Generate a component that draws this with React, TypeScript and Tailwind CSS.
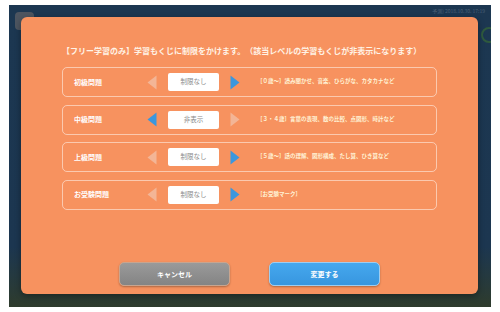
import React from "react";

type Level = {
  label: string;
  value: string;
  leftOn: boolean;
  rightOn: boolean;
  note: string;
};

const levels: Level[] = [
  { label: "初級問題", value: "制限なし", leftOn: false, rightOn: true, note: "［０歳〜］読み聞かせ、音楽、ひらがな、カタカナなど" },
  { label: "中級問題", value: "非表示", leftOn: true, rightOn: false, note: "［３・４歳］言葉の表現、数の比較、点図形、時計など" },
  { label: "上級問題", value: "制限なし", leftOn: false, rightOn: true, note: "［５歳〜］話の理解、図形構成、たし算、ひき算など" },
  { label: "お受験問題", value: "制限なし", leftOn: false, rightOn: true, note: "［お受験マーク］" },
];

function Arrow({ dir, on }: { dir: "left" | "right"; on: boolean }) {
  return (
    <svg width="10" height="15" viewBox="0 0 10 15" className="shrink-0">
      <path
        d={dir === "left" ? "M9.5 0.5 L0.5 7.5 L9.5 14.5 Z" : "M0.5 0.5 L9.5 7.5 L0.5 14.5 Z"}
        fill={on ? "#3b97de" : "#f3b596"}
      />
    </svg>
  );
}

function Row({ level }: { level: Level }) {
  return (
    <div className="flex h-[30px] items-center rounded-[5px] border border-white/50 pl-[11px]">
      <div className="w-[73px] text-[7px] font-bold leading-none text-white">{level.label}</div>
      <Arrow dir="left" on={level.leftOn} />
      <div className="ml-[11px] flex h-[18px] w-[51px] items-center justify-center rounded-[2px] bg-white text-[6.5px] text-[#8a8a8a]">
        {level.value}
      </div>
      <div className="ml-[11px] flex">
        <Arrow dir="right" on={level.rightOn} />
      </div>
      <div className="ml-[17px] text-[5.5px] font-bold leading-none text-[#fff3d6]">{level.note}</div>
    </div>
  );
}

export default function App() {
  return (
    <div
      className="h-[312px] w-[500px] overflow-hidden bg-white pl-[9px] pt-[5px]"
      style={{ fontFamily: '"Noto Sans CJK JP", "Noto Sans", sans-serif' }}
    >
      <div className="relative h-[302px] w-[482px] overflow-hidden bg-gradient-to-b from-[#1c3751] via-[#1c3650] via-80% to-[#2e3b2c]">
        {/* header behind the dialog */}
        <div className="flex items-center gap-[6px] pl-[6px] pt-[7px]">
          <div className="h-[18px] w-[19px] rounded-[4px] bg-[#4d5560]" />
          <div className="text-[10px] font-bold text-[#5f6b78]">フリー学習モード</div>
        </div>
        <div className="absolute right-[6px] top-[2px] text-[5px] text-[#4a6077]">予測) 2018.10.30. 17:19</div>
        <div className="absolute right-[-6px] top-[22px] h-[16px] w-[16px] rounded-full border-2 border-[#2f5a3e]" />

        {/* dialog */}
        <div className="absolute left-[12px] top-[12px] flex h-[277px] w-[457px] flex-col rounded-[6px] bg-[#f7925f] px-[41px] pt-[28px] shadow-[0_2px_6px_rgba(0,0,0,0.35)]">
          <div className="text-[8px] font-bold text-[#fff3e6]">
            【フリー学習のみ】学習もくじに制限をかけます。（該当レベルの学習もくじが非表示になります）
          </div>
          <div className="mt-[10px] flex flex-col gap-[7.5px]">
            {levels.map((l) => (
              <Row key={l.label} level={l} />
            ))}
          </div>
          <div className="mt-auto mb-[8px] flex justify-center gap-[39px]">
            <button className="h-[24px] w-[111px] rounded-[5px] border border-[#c9a58f] bg-gradient-to-b from-[#9a9a9a] to-[#848484] text-[7px] font-bold text-white shadow-[0_1px_2px_rgba(0,0,0,0.3)]">
              キャンセル
            </button>
            <button className="h-[24px] w-[111px] rounded-[5px] border border-[#9fcdf0] bg-gradient-to-b from-[#45a8ee] to-[#3896df] text-[7px] font-bold text-white shadow-[0_1px_2px_rgba(0,0,0,0.3)]">
              変更する
            </button>
          </div>
        </div>
      </div>
    </div>
  );
}
